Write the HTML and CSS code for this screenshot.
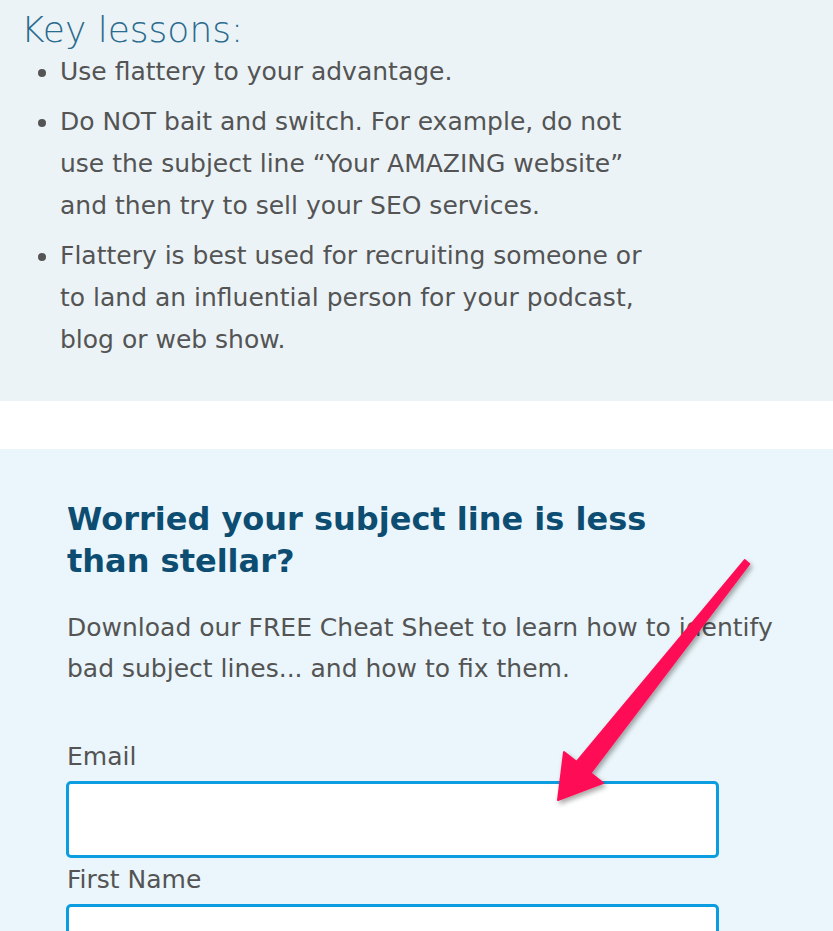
FILE: index.html
```html
<!DOCTYPE html>
<html>
<head>
    <meta charset="UTF-8">
    <meta name="viewport" content="width=device-width, initial-scale=1.0">
    <title>Key lessons</title>
    <link rel="stylesheet" href="styles.css">
</head>
<body>
    <!-- Key lessons box -->
    <div class="lessons">
        <h3>Key lessons:</h3>
        <ul>
            <li>Use flattery to your advantage.</li>
            <li>Do NOT bait and switch. For example, do not use the subject line “Your AMAZING website” and then try to sell your SEO services.</li>
            <li>Flattery is best used for recruiting someone or to land an influential person for your podcast, blog or web show.</li>
        </ul>
    </div>

    <!-- Opt-in form -->
    <div class="optin">
        <h2>Worried your subject line is less than stellar?</h2>
        <p>Download our FREE Cheat Sheet to learn how to identify bad subject lines... and how to fix them.</p>
        <form>
            <label for="email">Email</label>
            <input type="email" id="email" name="email">
            <label for="fname">First Name</label>
            <input type="text" id="fname" name="fname">
        </form>
    </div>

    <!-- Annotation arrow -->
    <svg class="arrow" width="833" height="931" viewBox="0 0 833 931">
        <defs>
            <filter id="shadow" x="-20%" y="-20%" width="140%" height="140%">
                <feDropShadow dx="2" dy="3" stdDeviation="2.5" flood-color="#000" flood-opacity="0.35"/>
            </filter>
        </defs>
        <polygon filter="url(#shadow)" fill="#fe0f56" stroke="#fe0f56" stroke-width="2" stroke-linejoin="round"
            points="744.7,560.1 576.5,761.9 564,752 558,800 603,783 590.5,773.1 749.3,563.9"/>
    </svg>
</body>
</html>
```

FILE: styles.css
```css
body {
    margin: 0;
    font-family: 'DejaVu Sans', sans-serif;
    color: #545454;
    position: relative;
    overflow: hidden;
    height: 931px;
}
.lessons {
    background-color: #ebf3f7;
    padding: 10px 0 40px 0;
}
.lessons h3 {
    margin: 0;
    padding-left: 21px;
    font-size: 36px;
    font-weight: 200;
    line-height: 40px;
    color: #2a6b8e;
}
.lessons ul {
    margin: 1px 0 0 0;
    padding-left: 60px;
    padding-right: 165px;
    font-size: 25px;
    line-height: 42px;
}
.lessons li {
    margin-bottom: 8px;
}
.lessons li:last-child {
    margin-bottom: 0;
}
.optin {
    background-color: #eaf6fb;
    margin-top: 48px;
    padding: 49px 30px 40px 67px;
}
.optin h2 {
    margin: 0;
    max-width: 620px;
    font-size: 32px;
    font-weight: 700;
    line-height: 42px;
    color: #0d4d72;
}
.optin p {
    margin: 25px 0 0 0;
    font-size: 25px;
    line-height: 41px;
}
.optin form {
    margin-top: 53px;
}
.optin label {
    display: block;
    font-size: 25px;
    line-height: 30px;
}
.optin input {
    display: block;
    box-sizing: border-box;
    width: 653px;
    height: 77px;
    margin: 9px 0 7px -1px;
    border: 3px solid #0b9de0;
    border-radius: 5px;
    background-color: #fff;
}
.arrow {
    position: absolute;
    top: 0;
    left: 0;
    pointer-events: none;
}
```
